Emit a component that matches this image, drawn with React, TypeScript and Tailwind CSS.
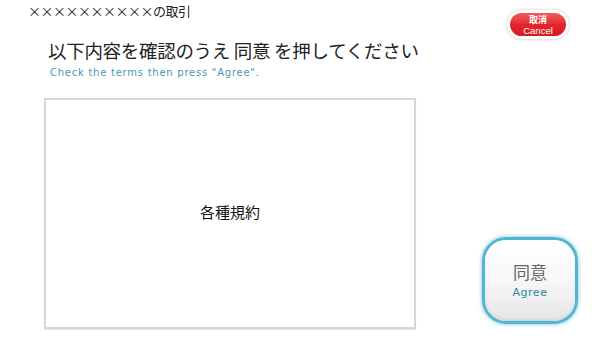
import React from 'react';

const jp = { fontFamily: '"Noto Sans CJK JP", "Noto Sans", sans-serif' };

export default function App() {
  return (
    <div className="relative w-[601px] h-[338px] bg-white overflow-hidden" style={jp}>
      {/* header */}
      <div className="flex items-start justify-between pl-[28px] pr-[32px] pt-[2px]">
        <div className="text-[13px] leading-[18px] text-[#222] tracking-[-0.5px]">××××××××××の取引</div>
        <div className="mt-[8px] rounded-full bg-white p-[3px] shadow-[0_0_3px_rgba(0,0,0,0.25)]">
          <div className="flex w-[56px] h-[23px] flex-col items-center justify-center rounded-full bg-gradient-to-b from-[#f05a5f] via-[#e2252c] to-[#d41c22]">
            <span className="text-[9px] leading-[11px] font-bold text-white">取消</span>
            <span className="text-[9.5px] leading-[11px] text-white" style={{ fontFamily: '"Liberation Sans", sans-serif' }}>Cancel</span>
          </div>
        </div>
      </div>

      <div className="pl-[48px] -mt-[1px]">
        <div className="text-[18.5px] leading-[24px] text-[#222] tracking-[-0.3px]">以下内容を確認のうえ 同意 を押してください</div>
        <div className="mt-[5px] pl-[2px] text-[10px] leading-[12px] text-[#4a98b0] tracking-[0.75px]" style={{ fontFamily: '"DejaVu Sans", sans-serif' }}>
          Check the terms then press "Agree".
        </div>
      </div>

      <div className="flex items-end gap-[66px] pl-[44px] mt-[19px]">
        <div className="flex w-[372px] h-[231px] items-center justify-center border-2 border-[#d6d6d6] shadow-[0_1px_1px_rgba(0,0,0,0.08)]">
          <span className="text-[15px] text-[#111] -mt-[2px]">各種規約</span>
        </div>
        <div className="mb-[5px] rounded-[24px] border-[3px] border-[#52b6d2] shadow-[0_0_4px_rgba(60,170,200,0.7)]">
          <div className="flex w-[90px] h-[81px] flex-col items-center justify-center rounded-[21px] bg-gradient-to-b from-white via-[#f7f7f7] to-[#e6e6e6] shadow-[inset_0_-2px_3px_rgba(0,0,0,0.08)]">
            <span className="text-[17px] leading-[22px] text-[#666]">同意</span>
            <span className="text-[11px] leading-[14px] text-[#2f86a6] tracking-[0.5px] mt-[3px]" style={{ fontFamily: '"DejaVu Sans", sans-serif' }}>Agree</span>
          </div>
        </div>
      </div>
    </div>
  );
}
